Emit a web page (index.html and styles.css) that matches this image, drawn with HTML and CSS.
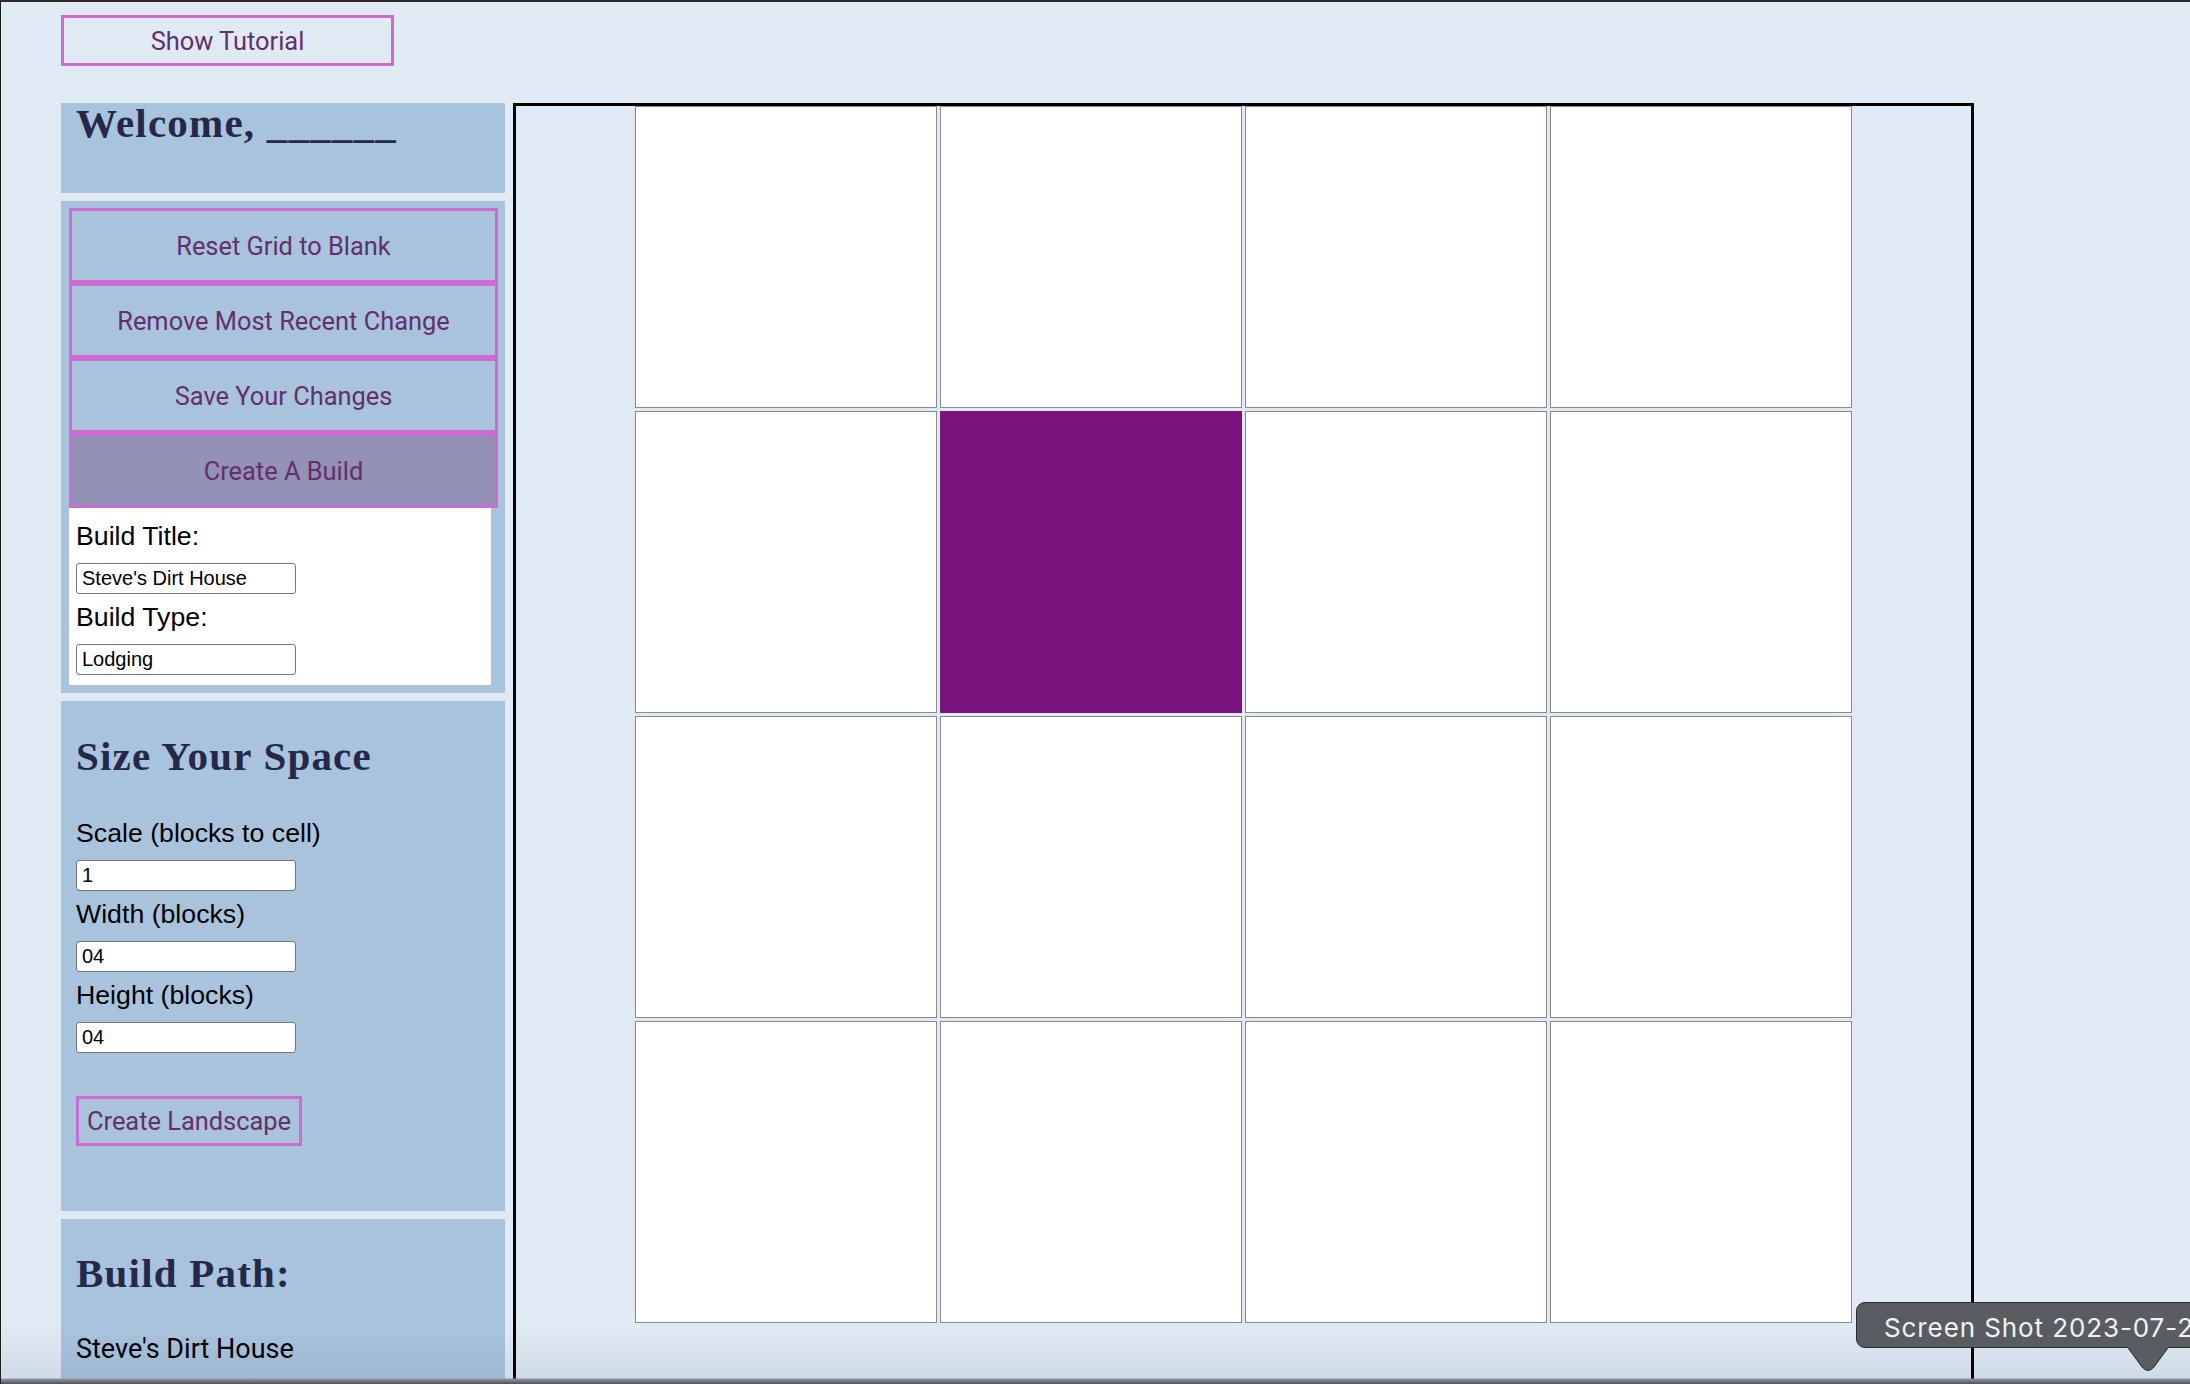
FILE: index.html
```html
<!DOCTYPE html>
<html lang="en">
<head>
<meta charset="utf-8">
<title>Build Planner</title>
<link rel="stylesheet" href="styles.css">
</head>
<body>
<div class="screen">
  <div class="page">
    <button class="btn tutorial">Show Tutorial</button>
    <div class="main">
      <aside class="sidebar">
        <section class="panel welcome">
          <h1 class="heading">Welcome, ______</h1>
        </section>
        <section class="panel actions">
          <button class="btn action">Reset Grid to Blank</button>
          <button class="btn action">Remove Most Recent Change</button>
          <button class="btn action">Save Your Changes</button>
          <button class="btn action active">Create A Build</button>
          <form class="build-form">
            <label class="field-label">Build Title:</label>
            <input class="field-input" type="text" value="Steve's Dirt House">
            <label class="field-label">Build Type:</label>
            <input class="field-input" type="text" value="Lodging">
          </form>
        </section>
        <section class="panel size">
          <h2 class="heading">Size Your Space</h2>
          <div class="fields">
            <label class="field-label">Scale (blocks to cell)</label>
            <input class="field-input" type="text" value="1">
            <label class="field-label">Width (blocks)</label>
            <input class="field-input" type="text" value="04">
            <label class="field-label">Height (blocks)</label>
            <input class="field-input last" type="text" value="04">
          </div>
          <button class="btn landscape">Create Landscape</button>
        </section>
        <section class="panel path">
          <h2 class="heading">Build Path:</h2>
          <p class="path-item">Steve's Dirt House</p>
        </section>
      </aside>
      <div class="frame">
        <div class="grid">
          <div class="cell"></div><div class="cell"></div><div class="cell"></div><div class="cell"></div>
          <div class="cell"></div><div class="cell filled"></div><div class="cell"></div><div class="cell"></div>
          <div class="cell"></div><div class="cell"></div><div class="cell"></div><div class="cell"></div>
          <div class="cell"></div><div class="cell"></div><div class="cell"></div><div class="cell"></div>
        </div>
      </div>
    </div>
  </div>
  <div class="dock-shade"></div>
  <div class="tooltip">
    <span class="tooltip-text">Screen Shot 2023-07-2</span>
    <svg class="tooltip-arrow" width="40" height="26" viewBox="0 0 40 26">
      <path d="M0 1 L14 20 Q20 27 26 20 L40 1" fill="#595d62" stroke="#2a2c2f" stroke-width="1"/>
      <rect x="0" y="0" width="40" height="1.5" fill="#595d62"/>
    </svg>
  </div>
</div>
</body>
</html>
```
FILE: styles.css
```css
* { box-sizing: border-box; }

html, body {
  margin: 0;
  padding: 0;
  background: #dfeaf4;
  overflow: hidden;
}

.screen {
  position: relative;
  width: 2190px;
  height: 1384px;
  overflow: hidden;
  background: #dfeaf4;
  border-top: 2px solid #2b2b2b;
  border-left: 1px solid #1e1e1e;
}

.page {
  padding-left: 60px;
  padding-top: 13px;
}

.btn {
  font-family: Roboto, "Liberation Sans", sans-serif;
  font-size: 25.4px;
  color: #62306a;
  background: transparent;
  border: 3px solid #cd6bd3;
  border-radius: 0;
  cursor: pointer;
  padding: 0;
  margin: 0;
  display: block;
}

.tutorial {
  width: 333px;
  height: 51px;
}

.main {
  display: flex;
  align-items: flex-start;
  gap: 8px;
  margin-top: 37px;
}

.sidebar {
  width: 444px;
  flex: 0 0 444px;
  display: flex;
  flex-direction: column;
  gap: 8px;
}

.panel {
  background: #a9c3dc;
}

.heading {
  font-family: "Liberation Serif", "DejaVu Serif", serif;
  font-weight: bold;
  font-size: 41px;
  line-height: 40px;
  color: #252849;
  margin: 0;
  letter-spacing: 1.2px;
}

.welcome {
  height: 90px;
  padding: 0 0 0 15px;
}

.actions {
  padding: 7px 7px 8px 8px;
}

.action {
  width: 100%;
  height: 75px;
  background: #a9c3dc;
}

.action.active {
  background: #9391b4;
}

.build-form {
  background: #ffffff;
  width: 422px;
  padding: 13px 0 10px 7px;
  display: flex;
  flex-direction: column;
  align-items: flex-start;
}

.field-label {
  font-family: "Liberation Sans", Arial, sans-serif;
  font-size: 26.7px;
  line-height: 30px;
  color: #000;
  margin-bottom: 12px;
}

.field-input {
  width: 220px;
  height: 31px;
  border: 1px solid #767676;
  border-radius: 3px;
  background: #fff;
  padding: 0 5px;
  font-family: "Liberation Sans", Arial, sans-serif;
  font-size: 20px;
  color: #000;
  margin: 0 0 8px 0;
}

.build-form .field-input:last-child,
.field-input.last {
  margin-bottom: 0;
}

.size {
  padding: 35px 8px 65px 15px;
}

.fields {
  margin-top: 42px;
  display: flex;
  flex-direction: column;
  align-items: flex-start;
}

.landscape {
  margin-top: 43px;
  height: 50px;
  padding: 0 8px;
}

.path {
  padding: 34px 8px 40px 15px;
}

.path-item {
  margin: 41px 0 0 0;
  font-family: Roboto, "Liberation Sans", sans-serif;
  font-size: 27px;
  line-height: 30px;
  color: #000;
}

.frame {
  width: 1461px;
  height: 1400px;
  border: 3px solid #000;
  background: #dfeaf4;
}

.grid {
  display: grid;
  grid-template-columns: repeat(4, 302px);
  grid-auto-rows: 302px;
  gap: 3px;
  justify-content: center;
}

.cell {
  background: #ffffff;
  border: 1px solid #8a8a8a;
}

.cell.filled {
  background: #77137a;
  border-color: #77137a;
}

.dock-shade {
  position: absolute;
  left: 0;
  right: 0;
  bottom: 0;
  height: 62px;
  background: linear-gradient(to bottom,
    rgba(30, 50, 80, 0) 0px,
    rgba(30, 50, 80, 0.08) 56px,
    #8f959b 57px,
    #4e5257 62px);
  pointer-events: none;
}

.tooltip {
  position: absolute;
  left: 1855px;
  top: 1300px;
  width: 420px;
  height: 46px;
  background: #595d62;
  border: 1px solid #2a2c2f;
  border-radius: 9px;
  display: flex;
  align-items: center;
  padding-left: 27px;
  padding-top: 5px;
}

.tooltip-text {
  font-family: Inter, Roboto, sans-serif;
  font-size: 26px;
  color: #f2f2f2;
  white-space: nowrap;
  letter-spacing: 0.9px;
}

.tooltip-arrow {
  position: absolute;
  left: 271px;
  top: 44px;
}
```
